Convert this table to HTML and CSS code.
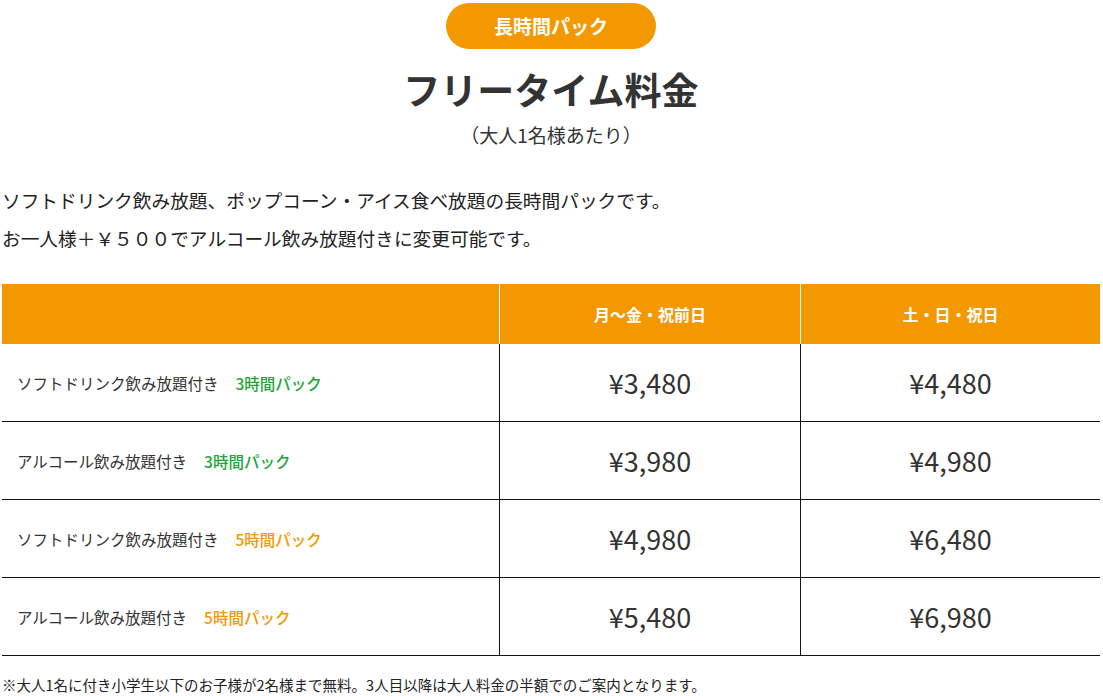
FILE: index.html
```html
<!DOCTYPE html>
<html lang="ja">
<head>
<meta charset="utf-8">
<link rel="stylesheet" href="styles.css">
</head>
<body>
<div class="wrap">
  <div class="pill">長時間パック</div>
  <h1 class="title">フリータイム料金</h1>
  <p class="sub">（大人1名様あたり）</p>
  <p class="lead">ソフトドリンク飲み放題、ポップコーン・アイス食べ放題の長時間パックです。<br>お一人様＋￥５００でアルコール飲み放題付きに変更可能です。</p>
  <table class="price">
    <thead>
      <tr><th class="c1"></th><th class="c2">月～金・祝前日</th><th class="c3">土・日・祝日</th></tr>
    </thead>
    <tbody>
      <tr><td class="lbl">ソフトドリンク飲み放題付き<span class="g">3時間パック</span></td><td class="yen">¥3,480</td><td class="yen">¥4,480</td></tr>
      <tr><td class="lbl">アルコール飲み放題付き<span class="g">3時間パック</span></td><td class="yen">¥3,980</td><td class="yen">¥4,980</td></tr>
      <tr><td class="lbl">ソフトドリンク飲み放題付き<span class="o">5時間パック</span></td><td class="yen">¥4,980</td><td class="yen">¥6,480</td></tr>
      <tr><td class="lbl">アルコール飲み放題付き<span class="o">5時間パック</span></td><td class="yen">¥5,480</td><td class="yen">¥6,980</td></tr>
    </tbody>
  </table>
  <p class="note">※大人1名に付き小学生以下のお子様が2名様まで無料。3人目以降は大人料金の半額でのご案内となります。</p>
</div>
</body>
</html>
```
FILE: styles.css
```css
html, body { margin: 0; padding: 0; background: #fff; }
body { font-family: "Noto Sans CJK JP", "Noto Sans", sans-serif; color: #333; }
.wrap { padding: 0 3px 0 2px; }
.pill {
  width: 210px; height: 46px; margin: 3px auto 0;
  background: #f39800; color: #fff; border-radius: 23px;
  text-align: center; line-height: 46px; font-size: 19px; font-weight: 700;
}
.title {
  margin: 15px 0 0; text-align: center; font-size: 37px; line-height: 50px;
  font-weight: 700; color: #333;
}
.sub { margin: 9px 0 0; text-align: center; font-size: 19px; line-height: 24px; color: #333; }
.lead { margin: 34px 0 0; font-size: 18.7px; line-height: 38px; color: #222; }
.price {
  margin-top: 27px; width: 100%; border-collapse: collapse; table-layout: fixed;
}
.price th {
  background: #f39800; color: #fff; height: 60px; padding: 0; font-size: 16px; font-weight: 700;
  border-left: 1px solid #fff;
}
.price th.c1 { border-left: none; width: 497px; }
.price th.c2 { width: 300px; }
.price td {
  height: 77px; padding: 0; border-bottom: 1px solid #111; border-left: 1px solid #111;
}
.price td.lbl { border-left: none; padding-left: 15px; font-size: 15.5px; color: #333; }
.lbl span { margin-left: 17px; font-weight: 500; }
.g { color: #22a43a; }
.o { color: #f39800; }
.yen { text-align: center; font-size: 27px; color: #333; }
.note { margin: 19px 0 0; font-size: 14.5px; line-height: 20px; color: #222; }
```
